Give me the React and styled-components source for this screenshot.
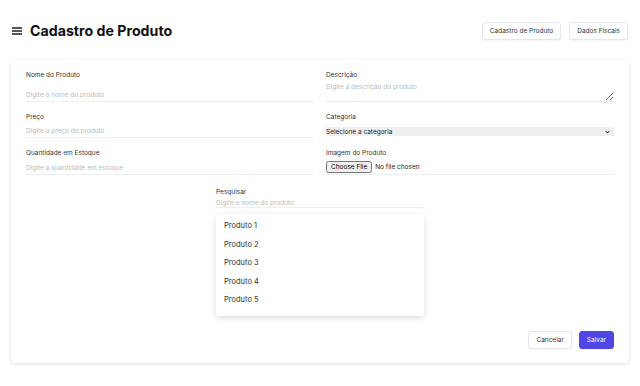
import React from 'react'
import styled, { createGlobalStyle } from 'styled-components'

const GlobalStyle = createGlobalStyle`
  body {
    margin: 0;
    background: #fff;
    font-family: Inter, "Noto Sans", sans-serif;
    color: #222;
  }
`

const Page = styled.div`
  width: 640px;
  height: 386px;
  overflow: hidden;
`

const Header = styled.header`
  display: flex;
  align-items: center;
  justify-content: space-between;
  padding: 22px 12px 0 12px;
`

const TitleWrap = styled.div`
  display: flex;
  align-items: center;
  gap: 8px;
`

const Title = styled.h1`
  margin: 0;
  font-size: 14.2px;
  line-height: 18px;
  font-weight: 700;
  color: #111;
`

const Nav = styled.div`
  display: flex;
  gap: 8px;
`

const NavButton = styled.button`
  height: 18px;
  padding: 0 7px;
  border: 1px solid #e5e7eb;
  border-radius: 3px;
  background: #fff;
  font-family: inherit;
  font-size: 6.5px;
  color: #333;
  box-shadow: 0 1px 1px rgba(0, 0, 0, 0.04);
`

const Card = styled.main`
  margin: 20px 11px 0 11px;
  padding: 11px 15px 14px 15px;
  background: #fff;
  border-radius: 4px;
  box-shadow: 0 1px 4px rgba(0, 0, 0, 0.12);
  display: flex;
  flex-direction: column;
`

const Grid = styled.div`
  display: grid;
  grid-template-columns: 1fr 1fr;
  column-gap: 12px;
  row-gap: 11px;
`

const Field = styled.div`
  display: flex;
  flex-direction: column;
  justify-content: space-between;
  gap: 3px;
`

const Label = styled.label`
  display: block;
  font-size: 6.5px;
  line-height: 9px;
  color: #333;
`

const lineInput = `
  display: block;
  border: none;
  border-bottom: 1px solid #eceef1;
  outline: none;
  padding: 0;
  margin: 0;
  font-family: inherit;
  font-size: 6.5px;
  color: #333;
  background: transparent;
  box-sizing: content-box;
  &::placeholder { color: #b8bbc0; }
`

const Input = styled.input`
  ${lineInput}
  height: 12px;
`

const TextArea = styled.textarea`
  ${lineInput}
  height: 18px;
  line-height: 9px;
  resize: vertical;
`

const SelectWrap = styled.div`
  position: relative;
  height: 9px;
  margin-bottom: 2px;
`

const Select = styled.select`
  display: block;
  width: 100%;
  height: 9px;
  border: none;
  padding: 0;
  margin: 0;
  appearance: none;
  font-family: inherit;
  font-size: 6.5px;
  color: #222;
  background: #efefef;
  outline: none;
`

const Chevron = styled.svg`
  position: absolute;
  right: 4px;
  top: 2.5px;
  pointer-events: none;
`

const FileInput = styled.input`
  display: block;
  height: 12px;
  margin: 0;
  padding: 0 0 1px 0;
  font-family: inherit;
  font-size: 6.5px;
  color: #222;
  border-bottom: 1px solid #eceef1;
  &::file-selector-button {
    font-family: inherit;
    font-size: 6.5px;
    height: 12px;
    padding: 0 3px;
    margin-right: 3px;
  }
`

const Search = styled.div`
  align-self: center;
  width: 208px;
  margin-top: 13px;
  display: flex;
  flex-direction: column;
`

const SearchInput = styled.input`
  ${lineInput}
  height: 9px;
  margin-top: 1px;
`

const Menu = styled.ul`
  list-style: none;
  margin: 6px 0 0 0;
  padding: 3px 0 6px 0;
  border-radius: 4px;
  box-shadow: 0 2px 6px rgba(0, 0, 0, 0.14);
`

const MenuItem = styled.li`
  height: 18.6px;
  line-height: 18.6px;
  padding: 0 8px;
  font-size: 7.5px;
  color: #333;
`

const Actions = styled.div`
  display: flex;
  justify-content: flex-end;
  gap: 7px;
  margin-top: 15px;
`

const ActionButton = styled.button`
  height: 18px;
  padding: 0 7px;
  border-radius: 3px;
  font-family: inherit;
  font-size: 6.5px;
  border: 1px solid ${(p) => (p.$primary ? '#4f46e5' : '#e5e7eb')};
  background: ${(p) => (p.$primary ? '#4f46e5' : '#fff')};
  color: ${(p) => (p.$primary ? '#fff' : '#333')};
  box-shadow: 0 1px 1px rgba(0, 0, 0, 0.04);
`

const MenuIcon = () => (
  <svg width="10" height="8" viewBox="0 0 10 8">
    <path d="M0 1h10M0 4h10M0 7h10" stroke="#222" strokeWidth="1.3" />
  </svg>
)

const produtos = ['Produto 1', 'Produto 2', 'Produto 3', 'Produto 4', 'Produto 5']

const App = () => {
  return (
    <Page>
      <GlobalStyle />
      <Header>
        <TitleWrap>
          <MenuIcon />
          <Title>Cadastro de Produto</Title>
        </TitleWrap>
        <Nav>
          <NavButton>Cadastro de Produto</NavButton>
          <NavButton>Dados Fiscais</NavButton>
        </Nav>
      </Header>

      <Card>
        <Grid>
          <Field>
            <Label>Nome do Produto</Label>
            <Input placeholder="Digite o nome do produto" />
          </Field>
          <Field>
            <Label>Descrição</Label>
            <TextArea placeholder="Digite a descrição do produto" />
          </Field>
          <Field>
            <Label>Preço</Label>
            <Input placeholder="Digite o preço do produto" />
          </Field>
          <Field>
            <Label>Categoria</Label>
            <SelectWrap>
              <Select defaultValue="">
                <option value="">Selecione a categoria</option>
              </Select>
              <Chevron width="5" height="4" viewBox="0 0 5 4">
                <path d="M0.5 0.8L2.5 3L4.5 0.8" fill="none" stroke="#222" strokeWidth="1" />
              </Chevron>
            </SelectWrap>
          </Field>
          <Field>
            <Label>Quantidade em Estoque</Label>
            <Input placeholder="Digite a quantidade em estoque" />
          </Field>
          <Field>
            <Label>Imagem do Produto</Label>
            <FileInput type="file" />
          </Field>
        </Grid>

        <Search>
          <Label>Pesquisar</Label>
          <SearchInput placeholder="Digite o nome do produto" />
          <Menu>
            {produtos.map((p) => (
              <MenuItem key={p}>{p}</MenuItem>
            ))}
          </Menu>
        </Search>

        <Actions>
          <ActionButton>Cancelar</ActionButton>
          <ActionButton $primary>Salvar</ActionButton>
        </Actions>
      </Card>
    </Page>
  )
}

export default App
